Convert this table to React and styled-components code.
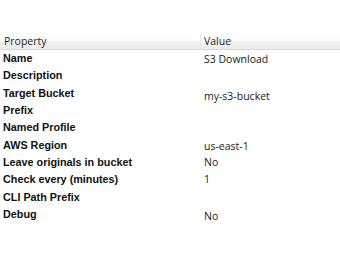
import React from 'react'
import styled, { createGlobalStyle } from 'styled-components'

const GlobalStyle = createGlobalStyle`
  html, body { margin: 0; padding: 0; background: #fff; }
  #root { width: 340px; height: 260px; overflow: hidden; }
`

// drop = how far the value sits below its label line
const rows = [
  { name: 'Name', value: 'S3 Download', drop: 1 },
  { name: 'Description', value: '' },
  { name: 'Target Bucket', value: 'my-s3-bucket', drop: 3 },
  { name: 'Prefix', value: '' },
  { name: 'Named Profile', value: '' },
  { name: 'AWS Region', value: 'us-east-1', drop: 1 },
  { name: 'Leave originals in bucket', value: 'No', drop: 0 },
  { name: 'Check every (minutes)', value: '1', drop: 0 },
  { name: 'CLI Path Prefix', value: '' },
  { name: 'Debug', value: 'No', drop: 2 },
]

const PropertyGrid = () => {
  return (
    <Wrapper>
      <GlobalStyle />
      <Header>
        <HeadCell>Property</HeadCell>
        <HeadCell divider>Value</HeadCell>
      </Header>
      {rows.map((row) => (
        <Row key={row.name}>
          <Label>{row.name}</Label>
          <Value drop={row.drop || 0}>{row.value}</Value>
        </Row>
      ))}
    </Wrapper>
  )
}

const Wrapper = styled.div`
  width: 340px;
  height: 260px;
  padding-top: 34px;
  box-sizing: border-box;
  background: #fff;
`

const Header = styled.div`
  display: grid;
  grid-template-columns: 200px 1fr;
  height: 15px;
  background: linear-gradient(#ffffff 0%, #fbfbfb 45%, #f0f0f0 55%, #ececec 100%);
  border-bottom: 1px solid #d8d8d8;
`

const HeadCell = styled.div`
  padding-left: ${({ divider }) => (divider ? '3px' : '4px')};
  border-left: ${({ divider }) => (divider ? '1px solid #e6e6e6' : 'none')};
  font-family: 'Open Sans', sans-serif;
  font-size: 10.5px;
  line-height: 15px;
  color: #1e1e1e;
`

const Row = styled.div`
  display: grid;
  grid-template-columns: 200px 1fr;
  height: 17.33px;
`

const Label = styled.div`
  padding-left: 3px;
  font-family: 'Liberation Sans', Arial, sans-serif;
  font-weight: bold;
  font-size: 10.8px;
  line-height: 16px;
  color: #111;
  white-space: nowrap;
`

const Value = styled.div`
  padding-left: 4px;
  padding-top: ${({ drop }) => drop}px;
  font-family: 'Open Sans', sans-serif;
  font-size: 10.5px;
  line-height: 17px;
  color: #1a1a1a;
  white-space: nowrap;
`

export default PropertyGrid
